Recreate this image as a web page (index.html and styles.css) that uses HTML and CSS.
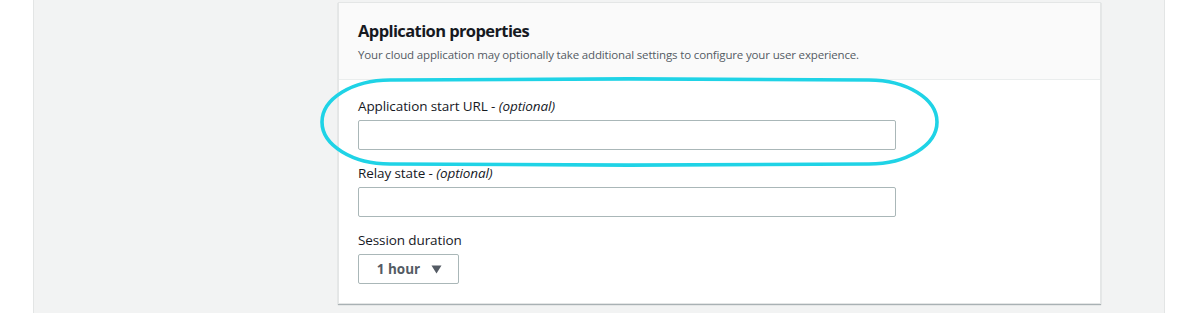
FILE: index.html
```html
<!DOCTYPE html>
<html>
<head>
<meta charset="utf-8">
<link rel="stylesheet" href="styles.css">
</head>
<body>
<div class="page">
  <div class="card">
    <div class="card-header">
      <h2 class="title">Application properties</h2>
      <p class="subtitle">Your cloud application may optionally take additional settings to configure your user experience.</p>
    </div>
    <div class="card-body">
      <div class="field">
        <label class="label">Application start URL - <i>(optional)</i></label>
        <div class="input"></div>
      </div>
      <div class="field">
        <label class="label">Relay state - <i>(optional)</i></label>
        <div class="input"></div>
      </div>
      <div class="field">
        <label class="label">Session duration</label>
        <div class="select"><span>1 hour</span><svg class="caret" width="11" height="9" viewBox="0 0 11 9"><path d="M0.5 0.5 H10.5 L5.5 8.5 Z" fill="#545b64"/></svg></div>
      </div>
    </div>
  </div>
  <svg class="annot" width="640" height="100" viewBox="316 76 640 100"><path d="M390 82 C500 80.5 760 80.5 869 82 C906.5 82 937 100.8 937 124 C937 147.2 906.5 166 869 166 C760 167.5 500 167.5 390 166 C352.5 166 322 147.2 322 124 C322 100.8 352.5 82 390 82 Z" fill="none" stroke="#1fd3e6" stroke-width="3.6"/></svg>
</div>
</body>
</html>
```
FILE: styles.css
```css
html, body { margin: 0; padding: 0; background: #fff; }
body { font-family: "Open Sans", "Noto Sans", sans-serif; color: #16191f; }
.page {
  position: relative;
  margin-left: 33px;
  width: 1132px;
  height: 313px;
  background: #f2f3f3;
  border-left: 1px solid #e3e5e5;
  border-right: 1px solid #e3e5e5;
  padding-top: 2px;
  box-sizing: border-box;
}
.card {
  margin-left: 304px;
  width: 763px;
  background: #fff;
  border: 1px solid #e4e6e6;
  box-shadow: 0 1px 1px rgba(0,28,36,0.3);
  box-sizing: border-box;
}
.card-header {
  background: #fafafa;
  border-bottom: 1px solid #eaeded;
  padding: 16px 19px 0;
  height: 77px;
  box-sizing: border-box;
}
.title { margin: 0; font-size: 16.5px; font-weight: 700; line-height: 24px; letter-spacing: -0.6px; }
.subtitle { margin: 4px 0 0; font-size: 11.5px; line-height: 16px; color: #545b64; letter-spacing: -0.15px; }
.card-body { padding: 16px 19px 19px; display: flex; flex-direction: column; gap: 13px; }
.field { display: flex; flex-direction: column; gap: 4px; }
.label { font-size: 13.5px; line-height: 20px; letter-spacing: -0.1px; }
.label i { font-style: italic; }
.input {
  width: 538px;
  height: 30px;
  border: 1px solid #aab7b8;
  border-radius: 2px;
  box-sizing: border-box;
}
.select {
  width: 101px;
  height: 30px;
  border: 1px solid #aab7b8;
  border-radius: 2px;
  box-sizing: border-box;
  display: flex;
  align-items: center;
  justify-content: center;
  gap: 11px;
  padding-left: 2px;
  font-size: 13.5px;
  font-weight: 700;
  color: #545b64;
}
.caret { display: block; }
.annot { position: absolute; left: 282px; top: 74px; }
```
